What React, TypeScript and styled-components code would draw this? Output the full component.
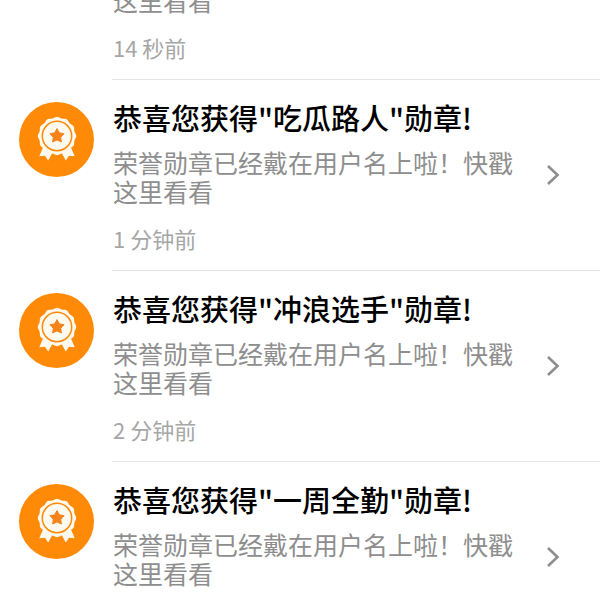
import React from "react";
import styled, { createGlobalStyle } from "styled-components";

const GlobalStyle = createGlobalStyle`
  * { box-sizing: border-box; }
  body {
    margin: 0;
    background: #fff;
    font-family: "Noto Sans CJK SC", sans-serif;
  }
`;

const Viewport = styled.main`
  height: 100vh;
  overflow: hidden;
`;

/* The feed is scrolled part of the way through its first entry. */
const Feed = styled.ul`
  list-style: none;
  margin: -111px 0 0;
  padding: 0;
`;

const Row = styled.a`
  display: flex;
  align-items: flex-start;
  padding-left: 19px;
  color: inherit;
  text-decoration: none;
`;

const BadgeIcon = styled.svg`
  flex: none;
  width: 75px;
  height: 75px;
  margin: 22px 18px 0 0;
`;

const Body = styled.div`
  flex: 1;
  min-width: 0;
  display: flex;
  align-items: center;
  gap: 24px;
  padding-right: 40px;
  border-bottom: 1px solid #e4e4e4;
`;

const Texts = styled.div`
  flex: 1;
  min-width: 0;
  padding: 20px 0 18px 1px;
`;

const Heading = styled.div`
  min-height: 34px;
  margin-bottom: 14px;
`;

const Title = styled.h2`
  margin: 0;
  font-size: 29px;
  line-height: 34px;
  font-weight: 500;
  color: #000;
`;

const Message = styled.p`
  margin: 0;
  font-size: 25px;
  line-height: 29px;
  font-weight: 400;
  color: #8e8e8e;
`;

const Footer = styled.div`
  min-height: 28px;
  margin-top: 18px;
`;

const Time = styled.time`
  display: block;
  font-size: 22px;
  line-height: 28px;
  font-weight: 400;
  color: #a6a6a6;
`;

const Chevron = styled.svg`
  flex: none;
  width: 14px;
  height: 22px;
`;

const BADGE_X = 38;
const BADGE_Y = 34;

const scallop = Array.from({ length: 144 }, (_, i) => {
  const a = (i / 144) * Math.PI * 2;
  const r = 18.6 + 0.6 * Math.cos(12 * a);
  return `${(BADGE_X + r * Math.sin(a)).toFixed(2)},${(BADGE_Y - r * Math.cos(a)).toFixed(2)}`;
}).join(" ");

const star = Array.from({ length: 10 }, (_, i) => {
  const a = (i / 10) * Math.PI * 2;
  const r = i % 2 ? 3.9 : 7.4;
  return `${(BADGE_X + r * Math.sin(a)).toFixed(2)},${(BADGE_Y - r * Math.cos(a)).toFixed(2)}`;
}).join(" ");

function MedalBadge() {
  return (
    <BadgeIcon viewBox="0 0 75 75" aria-hidden="true">
      <circle cx="37.5" cy="37.5" r="37.5" fill="#ff8a08" />
      <g fill="#fffaf0">
        <path d="M24 45.5 20.3 54.2 26 53.8 29.2 58.4 34.4 49Z" />
        <path d="M52 45.5 55.7 54.2 50 53.8 46.8 58.4 41.6 49Z" />
        <polygon points={scallop} />
      </g>
      <circle cx={BADGE_X} cy={BADGE_Y} r="14.7" fill="none" stroke="#ff8a08" strokeWidth="1.5" />
      <polygon points={star} fill="#f5821a" stroke="#f5821a" strokeWidth="1" strokeLinejoin="round" />
    </BadgeIcon>
  );
}

type Notice = { id: string; title?: string; time?: string };

const notices: Notice[] = [
  { id: "n1", time: "14 秒前" },
  { id: "n2", title: '恭喜您获得"吃瓜路人"勋章!', time: "1 分钟前" },
  { id: "n3", title: '恭喜您获得"冲浪选手"勋章!', time: "2 分钟前" },
  { id: "n4", title: '恭喜您获得"一周全勤"勋章!' },
];

export default function App() {
  return (
    <Viewport>
      <GlobalStyle />
      <Feed>
        {notices.map((n) => (
          <li key={n.id}>
            <Row href={`#${n.id}`}>
              <MedalBadge />
              <Body>
                <Texts>
                  <Heading>{n.title && <Title>{n.title}</Title>}</Heading>
                  <Message>荣誉勋章已经戴在用户名上啦！快戳这里看看</Message>
                  <Footer>{n.time && <Time>{n.time}</Time>}</Footer>
                </Texts>
                <Chevron viewBox="0 0 14 22" aria-hidden="true">
                  <path d="M2 2 11.5 11 2 20" fill="none" stroke="#8e8e8e" strokeWidth="2.6" />
                </Chevron>
              </Body>
            </Row>
          </li>
        ))}
      </Feed>
    </Viewport>
  );
}
